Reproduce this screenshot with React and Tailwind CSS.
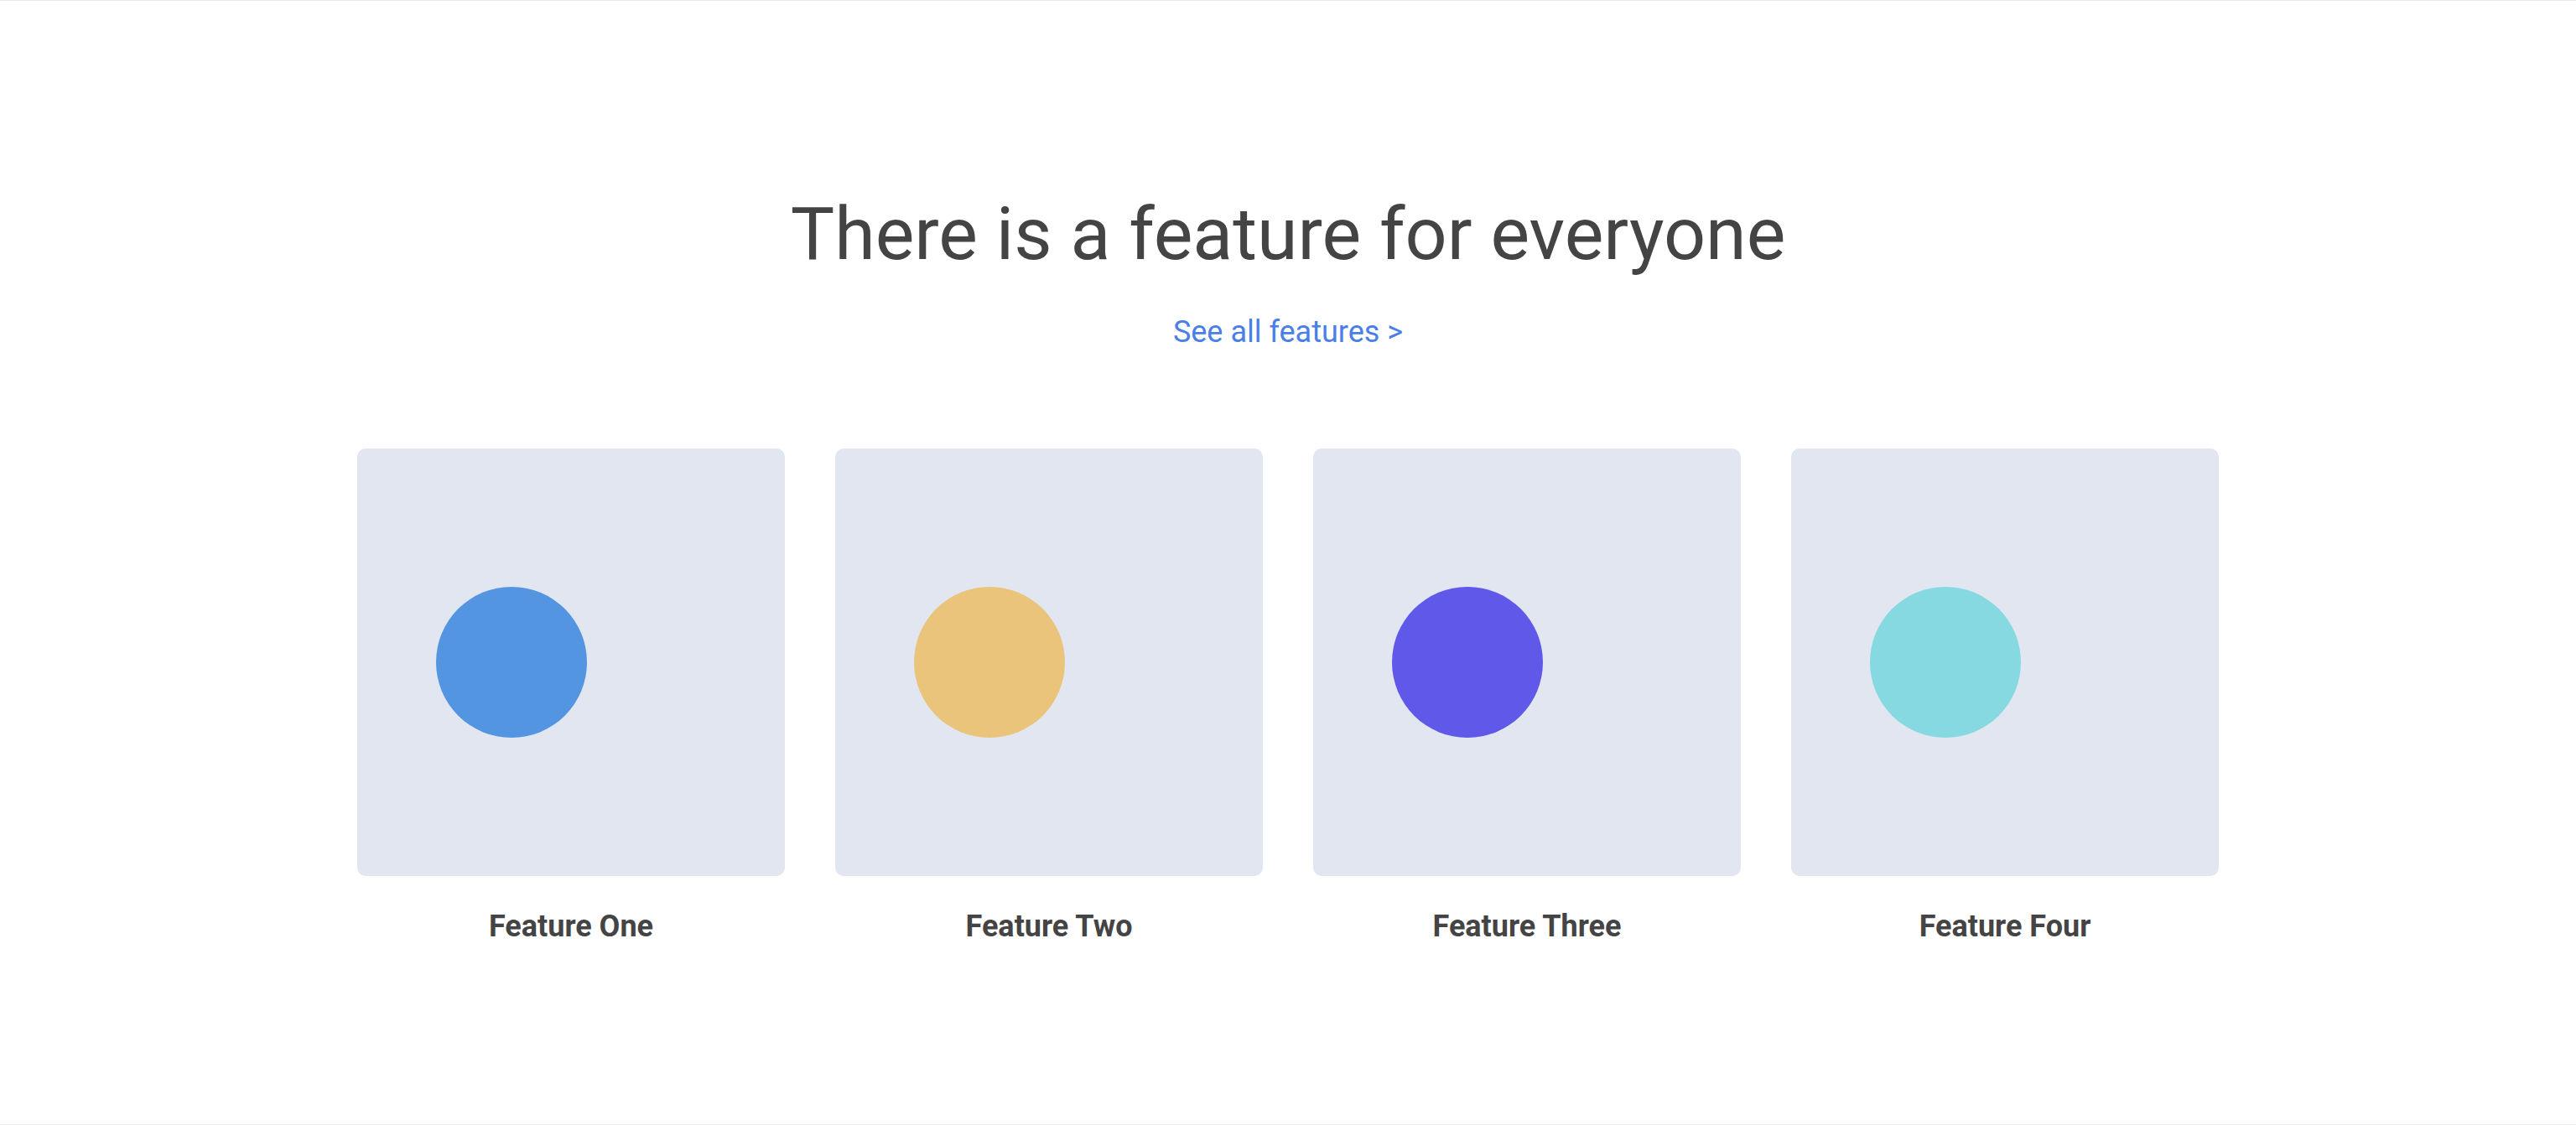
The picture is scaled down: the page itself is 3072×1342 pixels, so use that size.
import React from 'react';

const features = [
  { title: 'Feature One', color: 'bg-[#5495e2]' },
  { title: 'Feature Two', color: 'bg-[#ebc47b]' },
  { title: 'Feature Three', color: 'bg-[#5f58e8]' },
  { title: 'Feature Four', color: 'bg-[#86d9e0]' },
];

const FeatureCard = ({ title, color }) => (
  <div className="flex flex-col items-center">
    <div className="flex items-center w-[510px] h-[510px] pl-[94px] rounded-[10px] bg-[#e1e6f0]">
      <div className={`w-[180px] h-[180px] rounded-full ${color}`} />
    </div>
    <h3 className="mt-[42px] text-[36px] leading-none font-bold text-[#444444]">{title}</h3>
  </div>
);

const App = () => {
  return (
    <section
      className="flex flex-col items-center h-[1342px] pt-[234px] bg-white border-y border-[#ebebeb]"
      style={{ fontFamily: 'Roboto, "Open Sans", sans-serif' }}
    >
      <h1 className="text-[88px] leading-none font-normal text-[#444444]">
        There is a feature for everyone
      </h1>
      <a href="#" className="mt-[55px] text-[36px] leading-none text-[#4a7fe8]">
        See all features &gt;
      </a>
      <div className="flex gap-[60px] mt-[121px]">
        {features.map((f, idx) => (
          <FeatureCard key={idx} title={f.title} color={f.color} />
        ))}
      </div>
    </section>
  );
};

export default App;
